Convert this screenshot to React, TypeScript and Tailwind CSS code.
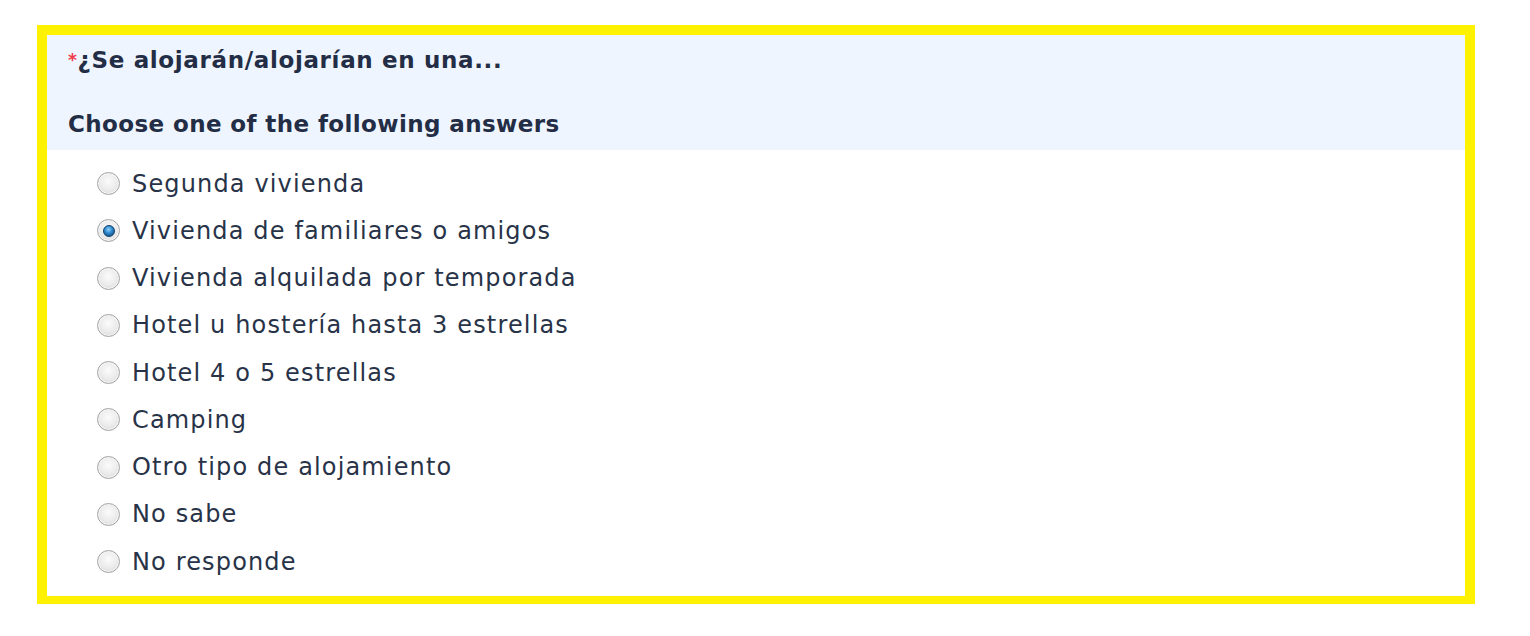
const options = [
  "Segunda vivienda",
  "Vivienda de familiares o amigos",
  "Vivienda alquilada por temporada",
  "Hotel u hostería hasta 3 estrellas",
  "Hotel 4 o 5 estrellas",
  "Camping",
  "Otro tipo de alojamiento",
  "No sabe",
  "No responde",
];

const Radio = ({ checked }: { checked: boolean }) => (
  <span className="flex h-[23px] w-[23px] shrink-0 items-center justify-center rounded-full border-[1.5px] border-[#a4a4a4] bg-[radial-gradient(circle_at_50%_40%,#fbfbfb_0%,#ececec_50%,#d2d2d2_100%)] shadow-[inset_0_0_0_1px_#f6f6f6]">
    {checked && (
      <span className="h-[12px] w-[12px] rounded-full border border-[#123d66] bg-[radial-gradient(circle_at_45%_35%,#8fd0fa_0%,#2b86cb_45%,#0b3c6c_100%)]" />
    )}
  </span>
);

export default function App() {
  return (
    <div className="h-[636px] w-[1530px] bg-white pt-[25px] pl-[37px] font-['DejaVu_Sans',Verdana,sans-serif]">
      <div className="w-[1438px] border-[10px] border-b-[8px] border-[#fff200] bg-white">
        <div className="bg-[#eef5fe] pl-[21px] pt-[12px] pb-[13px] text-[#232d45]">
          <div className="text-[23px] font-bold leading-[26px] tracking-[0.65px]">
            <span className="align-top text-[17px] text-[#f03a4a]">*</span>
            ¿Se alojarán/alojarían en una...
          </div>
          <div className="mt-[38px] text-[23px] font-bold leading-[26px] tracking-[0.4px]">
            Choose one of the following answers
          </div>
        </div>
        <div className="flex flex-col pl-[50px] pt-[10px] pb-[11px] text-[#283348]">
          {options.map((o, i) => (
            <label key={o} className="flex h-[47.25px] items-center gap-[12px] text-[24px] leading-none tracking-[1.15px]">
              <Radio checked={i === 1} />
              <span>{o}</span>
            </label>
          ))}
        </div>
      </div>
    </div>
  );
}
